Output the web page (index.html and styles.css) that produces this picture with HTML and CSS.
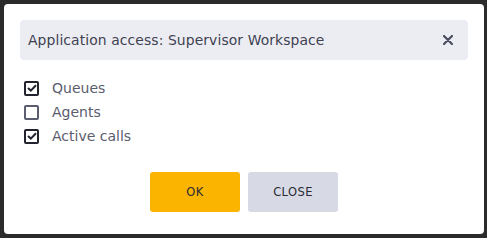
FILE: index.html
```html
<!DOCTYPE html>
<html lang="en">

<head>
    <meta charset="UTF-8">
    <title>Application access</title>
    <link rel="stylesheet" href="styles.css">
</head>

<body>
    <div class="dialog">
        <div class="dialog-head">
            <span class="dialog-title">Application access: Supervisor Workspace</span>
            <button class="dialog-close" aria-label="Close">
                <svg width="10" height="10" viewBox="0 0 10 10">
                    <path d="M1 1L9 9M9 1L1 9" stroke="#4a4d5e" stroke-width="2.2" stroke-linecap="round" />
                </svg>
            </button>
        </div>
        <ul class="options">
            <li class="option">
                <span class="box checked">
                    <svg width="10" height="8" viewBox="0 0 10 8"><path d="M1 4L3.8 6.6L9 1.2" fill="none" stroke="#22232e" stroke-width="2" /></svg>
                </span>
                Queues
            </li>
            <li class="option">
                <span class="box"></span>
                Agents
            </li>
            <li class="option">
                <span class="box checked">
                    <svg width="10" height="8" viewBox="0 0 10 8"><path d="M1 4L3.8 6.6L9 1.2" fill="none" stroke="#22232e" stroke-width="2" /></svg>
                </span>
                Active calls
            </li>
        </ul>
        <div class="actions">
            <button class="btn btn-ok">OK</button>
            <button class="btn btn-close">CLOSE</button>
        </div>
    </div>
</body>

</html>
```

FILE: styles.css
```css
* {
    margin: 0;
    padding: 0;
    box-sizing: border-box;
}

body {
    background: #2b2b2b;
    padding: 4px 3px 4px 4px;
    font-family: "DejaVu Sans", "Noto Sans", sans-serif;
}

.dialog {
    height: 230px;
    background: #fff;
    border-radius: 4px;
    padding: 16px 16px 0 16px;
}

.dialog-head {
    display: flex;
    align-items: center;
    justify-content: space-between;
    height: 40px;
    background: #ecedf3;
    border-radius: 4px;
    padding: 0 15px 0 8px;
}

.dialog-title {
    font-size: 13.9px;
    color: #3e4150;
    letter-spacing: 0.1px;
}

.dialog-close {
    border: 0;
    background: none;
    display: flex;
}

.options {
    list-style: none;
    padding: 16px 0 0 4px;
}

.option {
    display: flex;
    align-items: center;
    height: 24px;
    font-size: 14px;
    color: #5a5d6e;
}

.box {
    width: 15px;
    height: 15px;
    border: 2px solid #5b5e70;
    border-radius: 2px;
    margin-right: 13px;
    display: flex;
    align-items: center;
    justify-content: center;
}

.box.checked {
    border-color: #22232e;
}

.actions {
    display: flex;
    justify-content: center;
    gap: 8px;
    margin-top: 24px;
}

.btn {
    width: 90px;
    height: 40px;
    border: 0;
    border-radius: 3px;
    font-family: "DejaVu Sans", "Noto Sans", sans-serif;
    font-size: 11.5px;
    color: #2a2b36;
    letter-spacing: 0.4px;
}

.btn-ok {
    background: #fbb400;
}

.btn-close {
    background: #d7d9e4;
}
```
